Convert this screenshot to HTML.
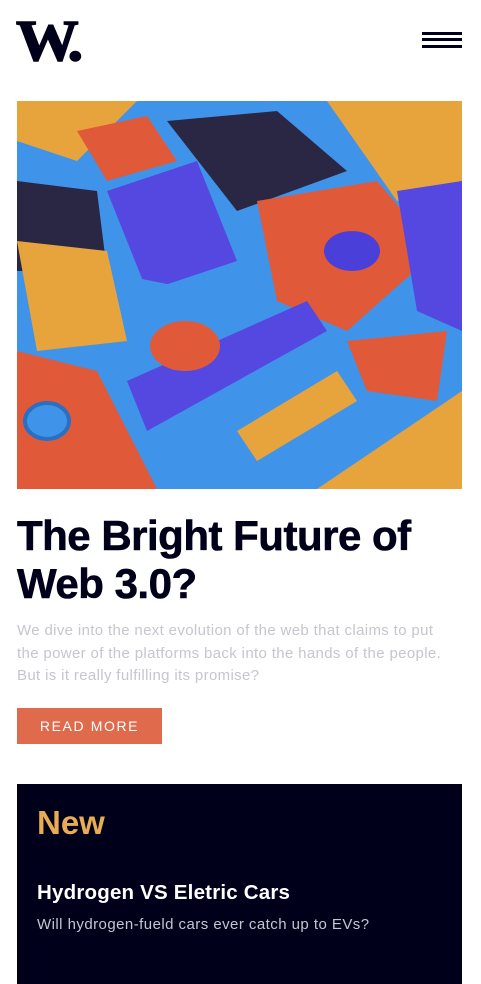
<!DOCTYPE html>
<html><head><style>
*{margin:0;padding:0;box-sizing:border-box}
body{width:481px;height:960px;overflow:hidden;background:#fff;font-family:"Liberation Sans",sans-serif;position:relative}
.logo{position:absolute;left:16px;top:7px;font-family:"Liberation Serif",serif;font-weight:bold;font-size:58px;color:#00001a;letter-spacing:-5px;transform:scaleX(1.08);transform-origin:left;-webkit-text-stroke:1.5px #00001a}
.ham{position:absolute;left:422px;width:40px;height:3px;background:#00001a}
.img{position:absolute;left:17px;top:101px;width:445px;height:388px;overflow:hidden;background:#3a8fe8}
h1{position:absolute;left:17px;top:512px;font-size:42px;line-height:48px;font-weight:bold;color:#00001a;letter-spacing:-0.5px;-webkit-text-stroke:0.6px #00001a}
p.d{position:absolute;left:17px;top:620px;width:445px;font-size:15px;line-height:22.5px;color:#c5c6ce;letter-spacing:0.35px}
.btn{position:absolute;left:17px;top:708px;width:145px;height:36px;background:#e06a4c;color:#fff;font-size:14px;letter-spacing:1.6px;text-align:center;line-height:36px}
.box{position:absolute;left:17px;top:784px;width:445px;height:200px;background:#00001a}
.new{position:absolute;left:20px;top:20px;color:#e9ab53;font-size:33px;font-weight:bold}
.h3{position:absolute;left:20px;top:97px;color:#fff;font-size:20.5px;font-weight:bold;letter-spacing:0.2px}
.s{position:absolute;left:20px;top:132px;color:#c5c6ce;font-size:15px;letter-spacing:0.45px}
</style></head><body>
<div class="logo">W.</div>
<div class="ham" style="top:32px"></div><div class="ham" style="top:38px"></div><div class="ham" style="top:45px"></div>
<div class="img">
<svg width="445" height="388" viewBox="0 0 445 388">
<rect width="445" height="388" fill="#3f94ea"/>
<polygon points="0,0 120,0 60,60 0,40" fill="#e8a43c"/>
<polygon points="150,20 260,10 330,70 220,110" fill="#2a2745"/>
<polygon points="90,90 180,60 220,160 130,190" fill="#5548e0"/>
<polygon points="60,30 130,15 160,60 90,80" fill="#e05a3a"/>
<polygon points="240,100 360,80 420,150 330,230 260,200" fill="#e05a3a"/>
<ellipse cx="335" cy="150" rx="28" ry="20" fill="#4a3fd8"/>
<polygon points="0,80 80,90 90,170 0,170" fill="#2a2745"/>
<polygon points="0,140 90,150 110,240 20,250" fill="#e8a43c"/>
<polygon points="310,0 445,0 445,80 380,100" fill="#e8a43c"/>
<polygon points="380,90 445,80 445,230 400,210" fill="#5548e0"/>
<polygon points="110,280 290,200 310,230 130,330" fill="#5548e0"/>
<ellipse cx="168" cy="245" rx="35" ry="25" fill="#e05a3a"/>
<polygon points="0,250 80,270 140,388 0,388" fill="#e05a3a"/>
<polygon points="220,330 320,270 340,300 240,360" fill="#e8a43c"/>
<polygon points="300,388 445,290 445,388" fill="#e8a43c"/>
<polygon points="330,240 430,230 420,300 350,290" fill="#e05a3a"/>
<ellipse cx="30" cy="320" rx="22" ry="18" fill="#3f94ea" stroke="#2a6fc0" stroke-width="4"/>
<polygon points="110,175 160,185 120,200" fill="#3f94ea"/>
</svg></div>
<h1>The Bright Future of<br>Web 3.0?</h1>
<p class="d">We dive into the next evolution of the web that claims to put<br>the power of the platforms back into the hands of the people.<br>But is it really fulfilling its promise?</p>
<div class="btn">READ MORE</div>
<div class="box"><div class="new">New</div><div class="h3">Hydrogen VS Eletric Cars</div><div class="s">Will hydrogen-fueld cars ever catch up to EVs?</div></div>
</body></html>
